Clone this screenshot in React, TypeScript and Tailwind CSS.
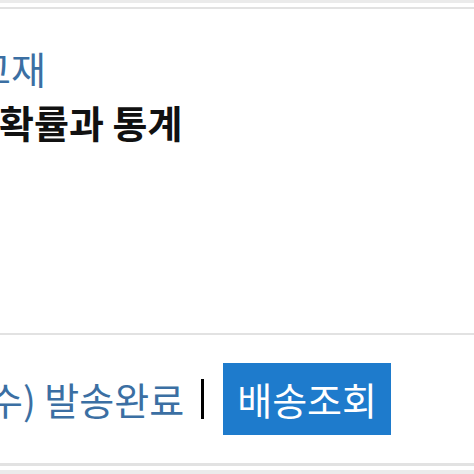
export default function App() {
  return (
    <main
      className="w-[474px] h-[474px] overflow-hidden bg-white flex flex-col"
      style={{ fontFamily: '"Noto Sans CJK KR", "Noto Sans", sans-serif' }}
    >
      {/* top edge */}
      <div className="h-[3px] bg-[#ebebeb]" />
      <div className="h-[4px] bg-white" />
      <div className="h-[2px] bg-[#e2e2e2]" />

      {/* book info */}
      <section className="h-[324px] overflow-hidden pt-[32px]">
        <p className="-ml-[24px] text-[38px] leading-[54px] text-[#3b6fa3] whitespace-nowrap">
          교재
        </p>
        <p className="-ml-[1px] text-[38px] leading-[54px] font-bold text-[#111] whitespace-nowrap">
          확률과 통계
        </p>
      </section>

      <div className="h-[2px] bg-[#e2e2e2]" />

      {/* delivery status */}
      <section className="h-[128px] flex items-center overflow-hidden">
        <span className="-ml-[12px] text-[38px] text-[#3b6fa3] whitespace-nowrap leading-none">
          수) 발송완료
        </span>
        <span className="ml-[17px] w-[3px] h-[40px] bg-black shrink-0" />
        <button className="ml-[19px] h-[72px] px-[14px] bg-[#1e7bcc] text-white text-[38px] leading-none whitespace-nowrap shrink-0">
          배송조회
        </button>
      </section>

      {/* bottom edge */}
      <div className="h-[3px] bg-[#e2e2e2]" />
      <div className="h-[4px] bg-white" />
      <div className="flex-1 bg-[#ebebeb]" />
    </main>
  );
}
